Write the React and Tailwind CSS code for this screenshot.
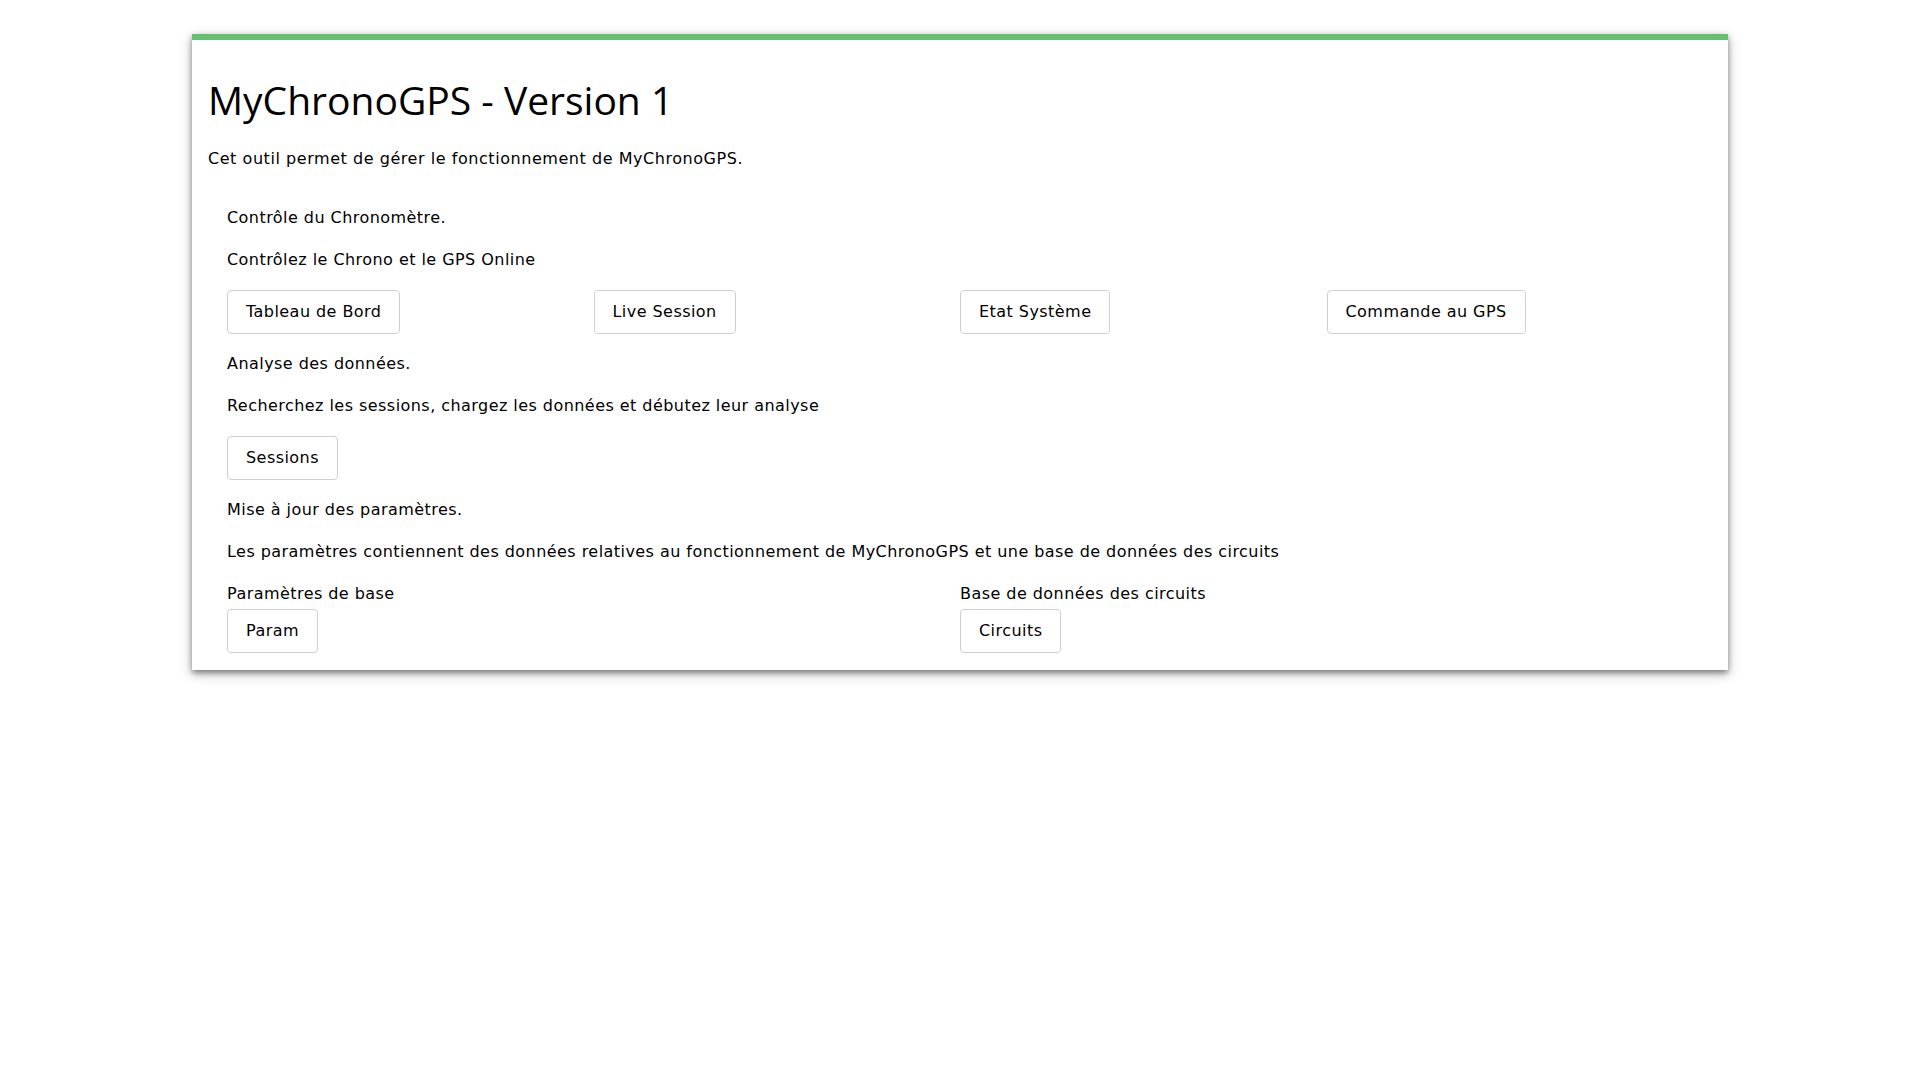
import React from "react";

const Btn = ({ children }) => (
  <button className="w-fit rounded-[4px] border border-[#cfcfcf] bg-white px-[18px] py-[9px] text-[16px] leading-[24px] tracking-[0.45px] text-black">
    {children}
  </button>
);

export default function App() {
  return (
    <div
      className="min-h-screen bg-white pt-[34px] text-black"
      style={{ fontFamily: '"DejaVu Sans", Verdana, sans-serif' }}
    >
      <div className="mx-auto w-[1536px] border-t-[6px] border-[#67c071] bg-white pb-[17px] shadow-[0_3px_6px_rgba(0,0,0,0.45),0_4px_14px_rgba(0,0,0,0.18)]">
        <h1
          className="mt-[33px] px-4 text-[39px] leading-[54px] font-normal text-black"
          style={{ fontFamily: '"Open Sans", "Noto Sans", Arial, sans-serif' }}
        >
          MyChronoGPS - Version 1
        </h1>
        <p className="mt-[20px] px-4 text-[16px] leading-[24px] tracking-[0.55px]">
          Cet outil permet de gérer le fonctionnement de MyChronoGPS.
        </p>

        <div className="mt-[35px] flex flex-col gap-[18px] px-[35px] text-[16px] leading-[24px] tracking-[0.45px]">
          <p>Contrôle du Chronomètre.</p>
          <p>Contrôlez le Chrono et le GPS Online</p>
          <div className="grid grid-cols-4">
            <div><Btn>Tableau de Bord</Btn></div>
            <div><Btn>Live Session</Btn></div>
            <div><Btn>Etat Système</Btn></div>
            <div><Btn>Commande au GPS</Btn></div>
          </div>

          <p>Analyse des données.</p>
          <p>Recherchez les sessions, chargez les données et débutez leur analyse</p>
          <div><Btn>Sessions</Btn></div>

          <p>Mise à jour des paramètres.</p>
          <p>
            Les paramètres contiennent des données relatives au fonctionnement de MyChronoGPS et une base de données des circuits
          </p>
          <div className="grid grid-cols-2">
            <div className="flex flex-col gap-[3px]">
              <span>Paramètres de base</span>
              <Btn>Param</Btn>
            </div>
            <div className="flex flex-col gap-[3px]">
              <span>Base de données des circuits</span>
              <Btn>Circuits</Btn>
            </div>
          </div>
        </div>
      </div>
    </div>
  );
}
